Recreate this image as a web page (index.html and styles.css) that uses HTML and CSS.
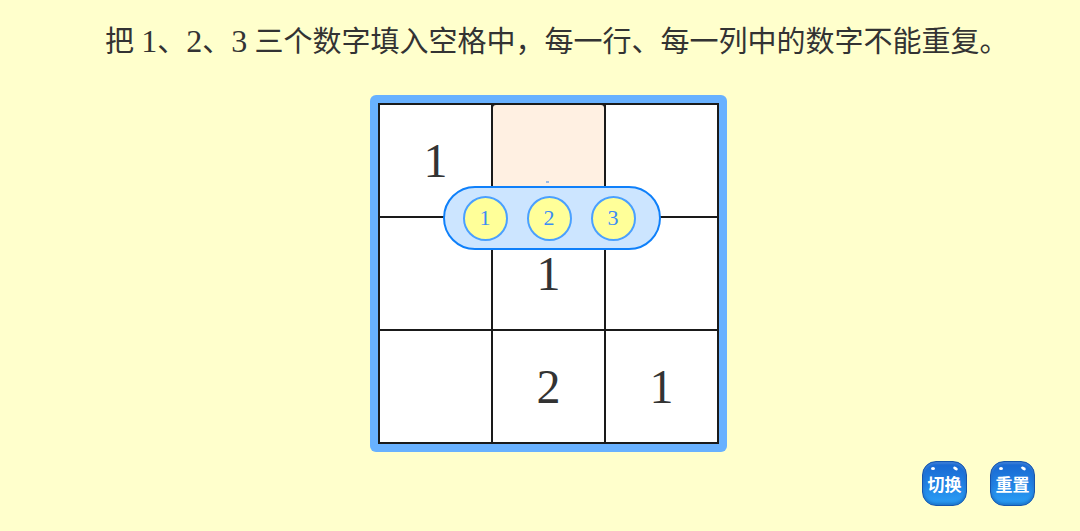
FILE: index.html
```html
<!DOCTYPE html>
<html lang="zh">
<head>
<meta charset="utf-8">
<title>数独</title>
<link rel="stylesheet" href="styles.css">
</head>
<body>
<div class="page">
  <h1 class="title">把 <span class="num">1</span>、<span class="num">2</span>、<span class="num">3</span> 三个数字填入空格中，每一行、每一列中的数字不能重复。</h1>
  <div class="board-row">
    <div class="frame">
      <div class="grid">
        <div class="cell">1</div>
        <div class="cell active"></div>
        <div class="cell"></div>
        <div class="cell"></div>
        <div class="cell">1</div>
        <div class="cell"></div>
        <div class="cell"></div>
        <div class="cell">2</div>
        <div class="cell">1</div>
      </div>
      <span class="tip-dot"></span>
      <div class="picker">
        <span class="choice">1</span>
        <span class="choice">2</span>
        <span class="choice">3</span>
      </div>
    </div>
  </div>
  <div class="controls">
    <button class="btn">切换</button>
    <button class="btn">重置</button>
  </div>
</div>
</body>
</html>
```

FILE: styles.css
```css
html, body {
  margin: 0;
  padding: 0;
}
body {
  background: #ffffcc;
  width: 1080px;
  height: 531px;
  overflow: hidden;
}
.page {
  display: flex;
  flex-direction: column;
}
.title {
  margin: 0;
  padding: 26px 0 0 105px;
  font-family: "Liberation Serif", "Noto Sans CJK SC", sans-serif;
  font-weight: normal;
  font-size: 29px;
  line-height: 30px;
  height: 30px;
  color: #333333;
  white-space: nowrap;
}
.num {
  font-size: 32px;
}
.board-row {
  display: flex;
  padding-left: 370px;
  margin-top: 39px;
}
.frame {
  position: relative;
  padding: 8px;
  background: #68b1ff;
  border-radius: 6px;
}
.grid {
  display: grid;
  grid-template-columns: repeat(3, 111px);
  grid-template-rows: repeat(3, 111px);
  gap: 2px;
  padding: 2px;
  background: #1a1a1a;
}
.cell {
  background: #ffffff;
  display: flex;
  align-items: center;
  justify-content: center;
  font-family: "Liberation Serif", serif;
  font-size: 48px;
  color: #333333;
}
.cell.active {
  background: #fff0e2;
  border-radius: 3px;
}
.tip-dot {
  position: absolute;
  left: 176px;
  top: 86px;
  width: 3px;
  height: 2px;
  background: #9bbbe6;
}
.picker {
  position: absolute;
  left: 73px;
  top: 91px;
  box-sizing: border-box;
  width: 218px;
  height: 64px;
  padding-right: 6px;
  border: 2px solid #0f80fa;
  border-radius: 32px;
  background: #cce5ff;
  display: flex;
  align-items: center;
  justify-content: center;
  gap: 19px;
}
.choice {
  width: 41px;
  height: 41px;
  border: 2px solid #4aa0ff;
  border-radius: 50%;
  background: #ffff99;
  display: flex;
  align-items: center;
  justify-content: center;
  font-family: "Liberation Serif", serif;
  font-size: 22px;
  color: #3a8cf6;
}
.controls {
  display: flex;
  justify-content: flex-end;
  gap: 23px;
  padding-right: 45px;
  margin-top: 9px;
}
.btn {
  position: relative;
  width: 45px;
  height: 45px;
  padding: 0;
  border: 1px solid #1555ad;
  border-radius: 14px;
  background: linear-gradient(180deg, #1766d0 0%, #2283e4 55%, #2aa0f7 100%);
  box-shadow: inset 0 -2px 3px rgba(0, 40, 120, 0.35), inset 0 2px 2px rgba(255, 255, 255, 0.15);
  color: #ffffff;
  font-family: "Noto Sans CJK SC", sans-serif;
  font-weight: bold;
  font-size: 17px;
  line-height: 1;
  display: flex;
  align-items: center;
  justify-content: center;
}
.btn::before,
.btn::after {
  content: "";
  position: absolute;
  top: 5px;
  width: 4px;
  height: 3px;
  border-radius: 50%;
  background: #ffffff;
}
.btn::before {
  left: 8px;
}
.btn::after {
  right: 8px;
  transform: rotate(30deg);
  width: 5px;
}
```
